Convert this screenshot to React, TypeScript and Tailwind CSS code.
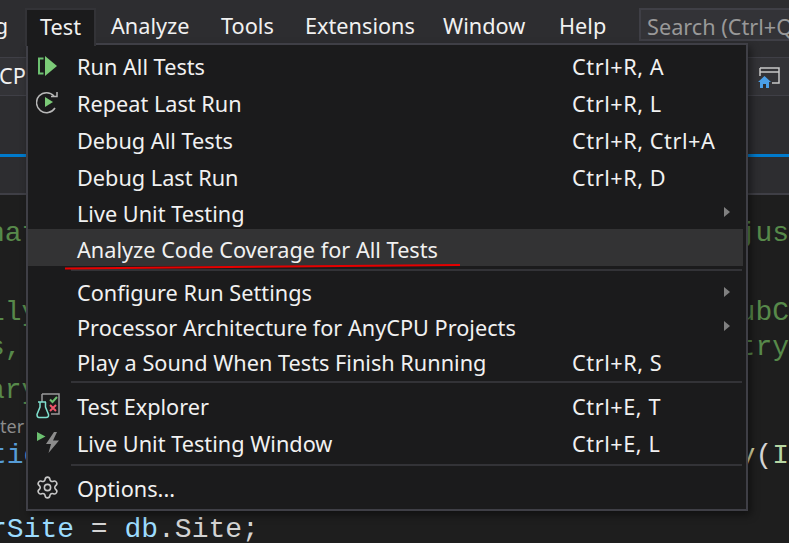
import { Settings } from "lucide-react";

const MENU_BAR = [
  { label: "Analyze", width: "w-[110px]" },
  { label: "Tools", width: "w-[84px]" },
  { label: "Extensions", width: "w-[138px]" },
  { label: "Window", width: "w-[116px]" },
  { label: "Help", width: "w-[95px]" },
];

const CODE_LINES = [
  { height: "h-[60px]", left: "nat", right: "jus" },
  { height: "h-[79px]", left: "lly", right: "ubC" },
  { height: "h-[35px]", left: "s,", right: "try" },
  { height: "h-[43px]", left: "ary", right: "" },
];

function RunAllIcon() {
  return (
    <svg width="22" height="22" viewBox="0 0 22 22">
      <path d="M6.500 2.500H1V19.500H6.500V17.500H3V4.500H6.500Z" fill="#6cc070" />
      <path d="M8 1 20 11 8 21Z" fill="#7ccb78" />
    </svg>
  );
}

function RepeatIcon() {
  return (
    <svg width="24" height="24" viewBox="0 0 24 24" fill="none">
      <path d="M18 5A10 10 0 1 0 19 17" stroke="#b8b8b8" strokeWidth="1.500" />
      <path d="M21 1V5.500H15" stroke="#b8b8b8" strokeWidth="1.500" />
      <path d="M9 6 17 11 9 16Z" fill="#7ccb78" />
    </svg>
  );
}

function TestExplorerIcon() {
  return (
    <svg width="24" height="26" viewBox="0 0 24 26" fill="none">
      <path d="M6 1H23V21H15" stroke="#9a9a9a" strokeWidth="1.500" />
      <path d="M6 1V9" stroke="#9a9a9a" strokeWidth="1.500" />
      <path d="M14 6.500 16.500 9 21 4" stroke="#6cc070" strokeWidth="2" />
      <path d="M14 12 20 18M20 12 14 18" stroke="#f0566a" strokeWidth="2" />
      <path
        d="M2 9H10M4 9V14L1 21.500Q1 24.500 3 24.500H10Q13 24.500 12.500 21.500L9.500 14V9"
        stroke="#7fe0cf"
        strokeWidth="1.500"
      />
    </svg>
  );
}

function LiveTestingIcon() {
  return (
    <svg width="24" height="26" viewBox="0 0 24 26">
      <path d="M1 2 9.500 6.500 1 11Z" fill="#6cc070" />
      <path d="M18 2 10 14H15L12.500 23 23 10.500H17L21 2Z" fill="#8c8c8c" />
    </svg>
  );
}

function SubArrow() {
  return <div className="h-0 w-0 border-y-[5px] border-l-[6px] border-y-transparent border-l-[#808080]" />;
}

function MenuRow({
  label,
  shortcut,
  height,
  icon,
  submenu,
  active,
}: {
  label: string;
  shortcut?: string;
  height: string;
  icon?: React.ReactNode;
  submenu?: boolean;
  active?: boolean;
}) {
  return (
    <div className={`flex items-center ${height} ${active ? "mr-[3px] bg-[#333334] pt-[2px]" : ""}`}>
      <div className="flex w-[49px] shrink-0 items-center justify-center pr-[10px]">{icon}</div>
      <div className="w-[495px] shrink-0 whitespace-nowrap pt-[3px] leading-none">{label}</div>
      <div className="w-[152px] shrink-0 whitespace-nowrap pt-[3px] leading-none tracking-[0.55px]">{shortcut}</div>
      {submenu && <SubArrow />}
    </div>
  );
}

function Separator() {
  return (
    <div className="flex h-[9px] items-center pl-[43px] pr-[4px]">
      <div className="h-[2px] w-full translate-y-[-1px] bg-[#333337]" />
    </div>
  );
}

export default function App() {
  return (
    <div className="relative flex h-[543px] w-[789px] flex-col overflow-hidden bg-[#1e1e1e] font-['Noto_Sans',sans-serif] text-[21.700px] text-[#f1f1f1]">
      <div className="flex h-[44px] shrink-0 items-start bg-[#2d2d30] pt-[8px] leading-none">
        <div className="flex h-[36px] w-[27px] items-center justify-end overflow-hidden pr-[19px]">g</div>
        <div className="relative z-10 -mt-[8px] -ml-[2px] h-[46px] w-[71px] pt-[8px]">
          <div className="flex h-full items-center justify-center border-2 border-b-0 border-[#333337] bg-[#1b1b1c] pb-[2px]">
            Test
          </div>
        </div>
        {MENU_BAR.map((item) => (
          <div key={item.label} className={`flex h-[36px] ${item.width} items-center pl-[15px]`}>
            {item.label}
          </div>
        ))}
        <div className="flex h-[33px] flex-1 items-center overflow-hidden whitespace-nowrap border-2 border-r-0 border-[#3f3f46] bg-[#333337] pl-[6px] pt-[4px] text-[#999999]">
          Search (Ctrl+Q)
        </div>
      </div>

      <div className="flex h-[110px] shrink-0 flex-col bg-[#2d2d30]">
        <div className="mt-[13px] flex h-[39px] items-center justify-between border-y border-[#3f3f46] bg-[#333337]">
          <span className="-ml-[1px]">CP</span>
          <svg className="mr-[8px]" width="24" height="24" viewBox="0 0 24 24" fill="none">
            <path d="M3 3H22V18H15M3 3V11M3 7H22" stroke="#c8c8c8" strokeWidth="1.500" />
            <path d="M1 17 7.500 11 14 17H12V23H3V17Z" fill="#4a9fe8" />
            <path d="M6 23V19H9V23Z" fill="#2d2d30" />
          </svg>
        </div>
      </div>
      <div className="h-[3px] shrink-0 bg-[#007acc]" />
      <div className="h-[38px] shrink-0 border-b-2 border-[#3f3f46] bg-[#2d2d30]" />

      <div className="flex-1 font-['Liberation_Mono',monospace] text-[28px]">
        {CODE_LINES.map((line) => (
          <div key={line.left} className={`flex items-end justify-between text-[#57894a] ${line.height}`}>
            <span className="-ml-[12px]">{line.left}</span>
            <span>{line.right}</span>
          </div>
        ))}
        <div className="flex h-[28px] items-end font-['Noto_Sans',sans-serif] text-[18px] text-[#8c8c8c]">ter</div>
        <div className="flex h-[37px] items-end justify-between">
          <span className="-ml-[10px] text-[#569cd6]">tic</span>
          <span>
            <span className="text-[#dcdcaa]">y</span>
            <span className="text-[#d4d4d4]">(</span>
            <span className="text-[#b8d7a3]">I</span>
          </span>
        </div>
        <div className="-ml-[10px] flex h-[74px] items-end whitespace-pre">
          <span className="text-[#9cdcfe]">rSite</span>
          <span className="text-[#d4d4d4]"> = </span>
          <span className="text-[#9cdcfe]">db</span>
          <span className="text-[#d4d4d4]">.Site;</span>
        </div>
      </div>

      {/* dropdown sits over the toolbar and editor */}
      <div className="absolute left-[26px] top-[43px] h-[468px] w-[722px] border-2 border-[#3f3f46] bg-[#1b1b1c] pt-[2px] shadow-[3px_4px_8px_rgba(0,0,0,0.45)]">
        <MenuRow height="h-[37px]" label="Run All Tests" shortcut="Ctrl+R, A" icon={<RunAllIcon />} />
        <MenuRow height="h-[37px]" label="Repeat Last Run" shortcut="Ctrl+R, L" icon={<RepeatIcon />} />
        <MenuRow height="h-[37px]" label="Debug All Tests" shortcut="Ctrl+R, Ctrl+A" />
        <MenuRow height="h-[37px]" label="Debug Last Run" shortcut="Ctrl+R, D" />
        <MenuRow height="h-[34px]" label="Live Unit Testing" submenu />
        <MenuRow height="h-[37px]" label="Analyze Code Coverage for All Tests" active />
        <Separator />
        <MenuRow height="h-[33px]" label="Configure Run Settings" submenu />
        <MenuRow height="h-[36px]" label="Processor Architecture for AnyCPU Projects" submenu />
        <MenuRow height="h-[34px]" label="Play a Sound When Tests Finish Running" shortcut="Ctrl+R, S" />
        <Separator />
        <MenuRow height="h-[37px]" label="Test Explorer" shortcut="Ctrl+E, T" icon={<TestExplorerIcon />} />
        <MenuRow height="h-[37px]" label="Live Unit Testing Window" shortcut="Ctrl+E, L" icon={<LiveTestingIcon />} />
        <Separator />
        <MenuRow
          height="h-[35px]"
          label="Options..."
          icon={<Settings size={25} color="#c8c8c8" strokeWidth={1.5} />}
        />
      </div>

      {/* red annotation drawn on the screenshot */}
      <svg className="absolute left-[60px] top-[260px]" width="405" height="12" viewBox="0 0 405 12" fill="none">
        <path d="M5 8.500 400 5" stroke="#e60000" strokeWidth="2" />
      </svg>
    </div>
  );
}
